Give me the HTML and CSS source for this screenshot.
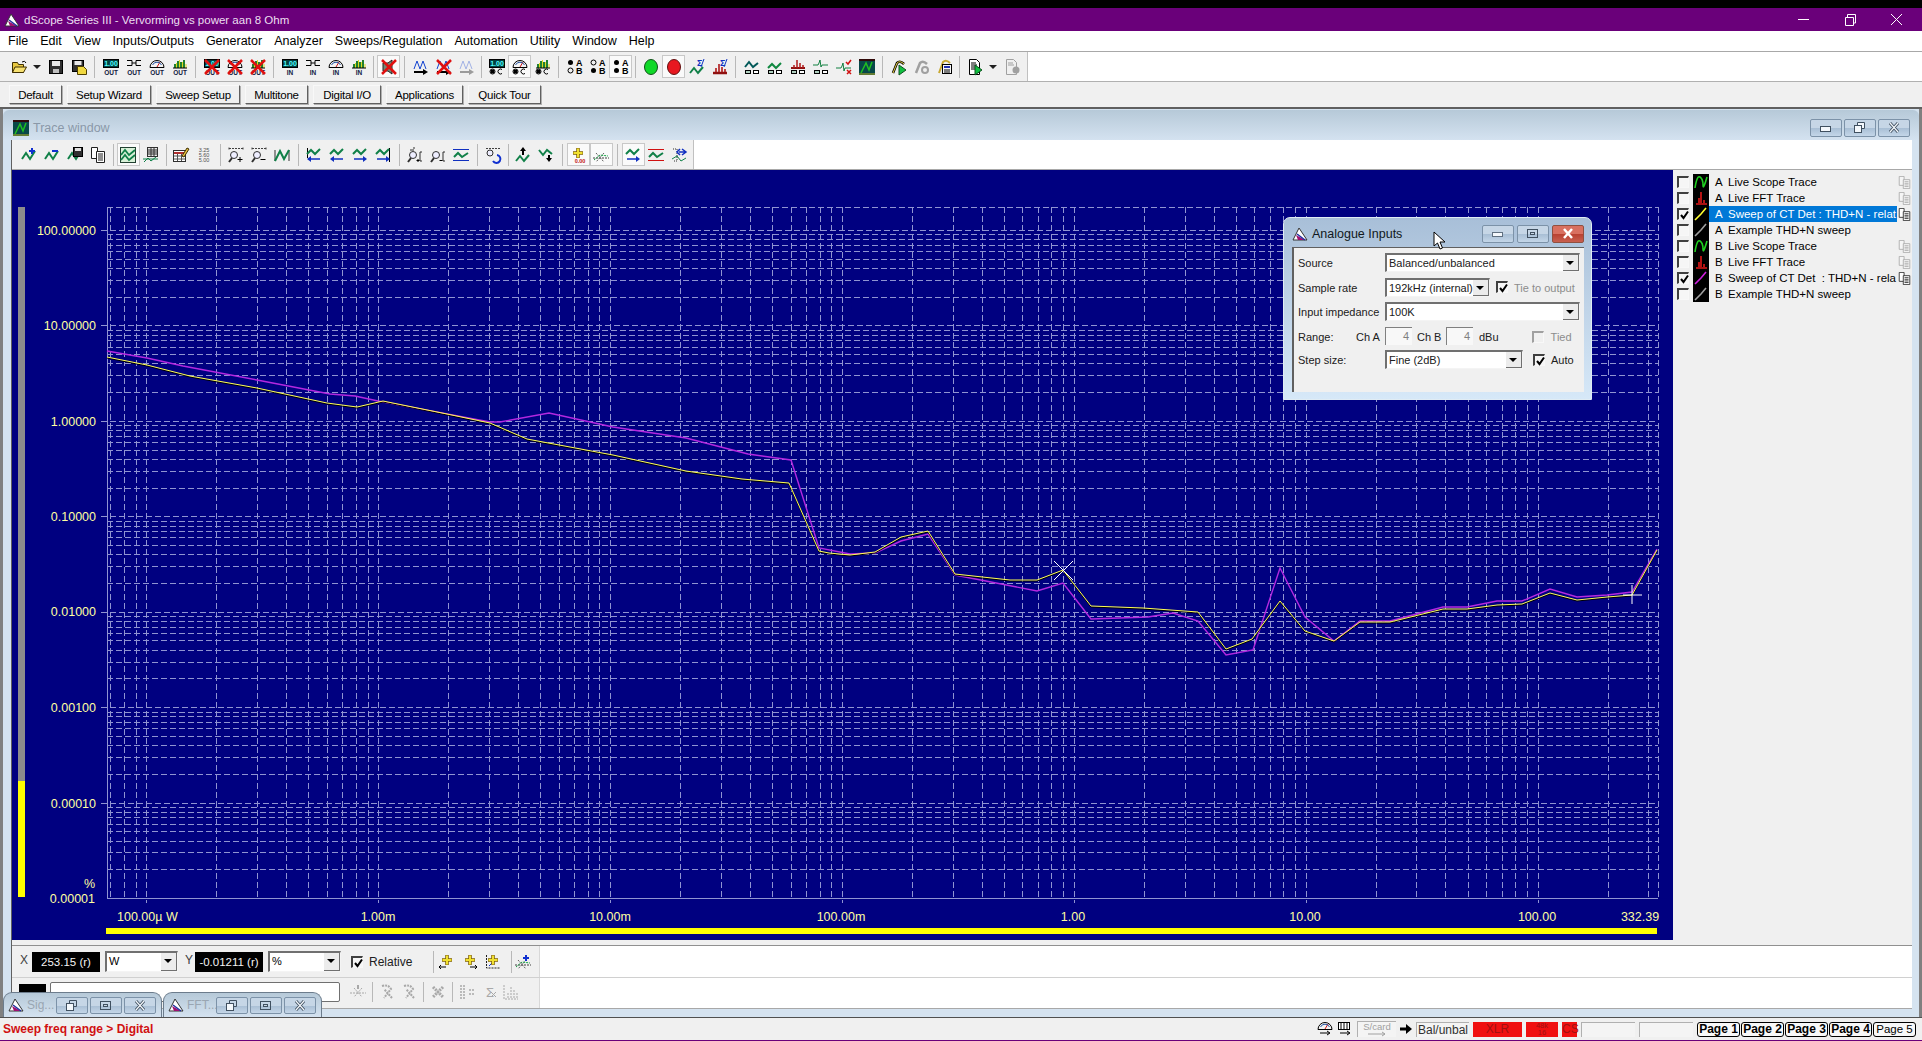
FILE: index.html
```html
<!DOCTYPE html>
<html lang="en">
<head>
    <meta charset="UTF-8">
    <title>dScope Series III - Vervorming vs power aan 8 Ohm</title>
    <link rel="stylesheet" href="styles.css">
</head>
<body>
    <svg class="defs" width="0" height="0">
        <defs>
            <g id="logo"><path d="M1 14L7 2l8 12z" fill="#fff" stroke="#333"/><path d="M4 9l9 5H6z" fill="#a01070"/><path d="M5 8l8 6" stroke="#2030a0" stroke-width="1.5"/></g>
            <g id="folder"><path d="M1.5 3.5h5l1 2h5v8h-11z" fill="#e8c840" stroke="#403000"/><path d="M4 8h11.5l-3 5.5h-11z" fill="#f6e070" stroke="#403000"/><path d="M11 3q3-2 4 1" fill="none" stroke="#000"/></g>
            <g id="save"><rect x="1.5" y="1.5" width="13" height="13" fill="#303030" stroke="#000"/><rect x="4" y="2" width="8" height="5" fill="#e8e8e8"/><rect x="5" y="10" width="6" height="4" fill="#c0c0c0"/></g>
            <g id="saveas"><rect x="1.5" y="1.5" width="11" height="11" fill="#303030" stroke="#000"/><rect x="3.5" y="2" width="7" height="4" fill="#e8e8e8"/><path d="M6.5 7.5h6l3 3v5h-9z" fill="#f0d840" stroke="#504000"/></g>
            <g id="readout"><rect x=".5" y=".5" width="15" height="8" fill="#004040" stroke="#000"/><text class="ico-t" x="8" y="7" fill="#50ffff">1.00</text></g>
            <g id="filter"><path d="M1 1.500h5v5H1M15 1.500h-5v5h5M6 4h4" fill="none" stroke="#000"/></g>
            <g id="meter"><path d="M1 8.500a7 7 0 0 1 14 0z" fill="#f4f4f4" stroke="#000"/><path d="M8 8l3-5" stroke="#d01010"/><path d="M3.500 6a5 5 0 0 1 9 0" fill="none" stroke="#2050a0"/></g>
            <g id="multi"><path d="M3 9V5M6 9V2M9 9V3M12 9V1" stroke="#208030" stroke-width="2"/><path d="M4.500 9V4M7.500 9V1M10.500 9V3M14 9V5" stroke="#e0d820"/><path d="M1 9h14" stroke="#000"/></g>
            <g id="cross"><path d="M1 1l14 14M15 1L1 15" stroke="#e01010" stroke-width="2.500"/></g>
            <g id="spk"><path d="M2 4h5l4-3v14l-4-3H2z" fill="#708878" stroke="#202020"/></g>
            <g id="blue-wave"><path d="M1 10l3-8 3 8 3-8 3 8" fill="none" stroke="#1040d0"/></g>
            <g id="arrow-r"><path d="M1 13h10" stroke="#000" stroke-width="2"/><path d="M10 10l5 3-5 3z"/></g>
            <g id="radios"><circle cx="3.500" cy="12.500" r="2" fill="#000"/><circle cx="3.500" cy="12.500" r="2.500" fill="none" stroke="#000"/><path d="M13 10.500a2.500 2.500 0 1 0 0 4" fill="none" stroke="#000"/></g>
            <g id="ab"><text class="ico-ab" x="9" y="7">A</text><text class="ico-ab" x="9" y="15">B</text></g>
            <g id="wave"><path d="M1 12l4-6 4 6 5-8" fill="none" stroke="#108048" stroke-width="2"/></g>
            <g id="wave-low"><path d="M1 14l4-5 4 5 5-6" fill="none" stroke="#108048" stroke-width="2"/></g>
            <g id="green-ball"><ellipse cx="8" cy="8" rx="6.500" ry="7.500" fill="#10d828" stroke="#105018"/></g>
            <g id="red-ball"><ellipse cx="8" cy="8" rx="6.500" ry="7.500" fill="#e81820" stroke="#601010"/></g>
            <g id="sigma"><text class="ico-s" x="8" y="7">Σ</text><path d="M15 0l-3 8" stroke="#1030c0"/></g>
            <g id="spec-red"><path d="M1 14h14" stroke="#901010" stroke-width="2.500"/><path d="M4 13V9M7 13V5M10 13V8M13 13V10" stroke="#b01818" stroke-width="1.600"/></g>
            <g id="tiles"><rect x="1.500" y="11.500" width="5" height="3" fill="#b0d0c0" stroke="#000"/><rect x="9.500" y="11.500" width="5" height="3" fill="#fff" stroke="#000"/></g>
            <g id="tile-wave"><path d="M1 8l4-5 4 5 5-4" fill="none" stroke="#005858" stroke-width="2"/></g>
            <g id="tile-wave2"><path d="M1 9l4-4 4 4 5-5" fill="none" stroke="#108840" stroke-width="2"/></g>
            <g id="tile-spec"><path d="M1 9h14" stroke="#901010" stroke-width="2"/><path d="M4 9V6M7 9V1M10 9V4M13 9V6" stroke="#b01818" stroke-width="1.500"/></g>
            <g id="tile-imp"><path d="M0 6h5l1-2 1-3 1 7 1-2h6" fill="none" stroke="#108040"/></g>
            <g id="imp-x"><path d="M0 9h5l1-2 1-3 1 8 1-3h6" fill="none" stroke="#108040"/><path d="M10 3l2 2 3-4" fill="none" stroke="#d01010" stroke-width="1.500"/><path d="M11 11l4 4M15 11l-4 4" stroke="#d01010" stroke-width="1.500"/></g>
            <g id="thumb"><rect width="16" height="16" fill="#084848"/><rect width="16" height="2" fill="#300808"/><path d="M2 14l5-10 3 7 3-8" fill="none" stroke="#20c020" stroke-width="1.500"/><path d="M0 15h16" stroke="#c0b020"/></g>
            <g id="curve"><path d="M2 14L6 4q3-3 7 1" fill="none" stroke="#000" stroke-width="2.500"/><path d="M2 14L6 4q3-3 7 1" fill="none" stroke="#e8d040"/></g>
            <g id="play"><path d="M8 6l7 5-7 5z" fill="#10c040" stroke="#105020"/></g>
            <g id="curve-gray"><path d="M2 14L6 4q3-3 7 1" fill="none" stroke="#a0a0a0" stroke-width="2.500"/><circle cx="11" cy="11" r="3" fill="none" stroke="#a0a0a0" stroke-width="2"/></g>
            <g id="notes"><path d="M2 14L6 3q3-3 7 1" fill="none" stroke="#c8a830" stroke-width="2"/><rect x="5.500" y="5.500" width="9" height="9" fill="#f8f8f8" stroke="#000"/><path d="M7 8h6" stroke="#2030b0" stroke-width="2"/><path d="M7 11h6M7 13h6" stroke="#000"/></g>
            <g id="doc"><path d="M2.500 .5h7l3 3v12h-10z" fill="#fff" stroke="#000"/><path d="M4 4h5M4 6h6M4 8h6M4 10h5" stroke="#000"/></g>
            <g id="doc-gray"><path d="M2.500 .5h7l3 3v12h-10z" fill="#f0f0f0" stroke="#a0a0a0"/><path d="M4 4h5M4 6h6" stroke="#a0a0a0"/><circle cx="12" cy="11" r="3.500" fill="#a0a0a0"/></g>
            <g id="plus-blue"><path d="M11 1v6M8 4h6" stroke="#1030d0" stroke-width="2"/></g>
            <g id="minus-blue"><path d="M8 4h6" stroke="#1030d0" stroke-width="2"/></g>
            <g id="copy"><path d="M1.500 .5h6v11h-6z" fill="#fff" stroke="#202020"/><path d="M6.500 4.500h8v11h-8z" fill="#fff" stroke="#202020"/><path d="M8 7h5M8 9h5M8 11h5M8 13h5" stroke="#202020"/></g>
            <g id="disk-small"><rect x="6.500" y=".5" width="9" height="9" fill="#303030" stroke="#000"/><rect x="8" y="1" width="6" height="3" fill="#e0e0e0"/></g>
            <g id="double-wave"><rect x=".5" y=".5" width="15" height="15" fill="#d8f0d8" stroke="#204030"/><path d="M1 8l4-5 4 5 6-5M1 13l4-5 4 5 6-5" fill="none" stroke="#108048" stroke-width="1.800"/></g>
            <g id="table-wave"><rect x="4.500" y=".5" width="10" height="9" fill="#e8e8e8" stroke="#303030"/><path d="M5 3h9M5 5h9M5 7h9M8 1v8M11 1v8" stroke="#303030"/><path d="M0 12h15M1 15l4-4 3 3 5-4" fill="none" stroke="#108048"/></g>
            <g id="form"><rect x=".5" y="3.500" width="12" height="11" fill="#fff" stroke="#303030"/><path d="M1 6h11" stroke="#b03030" stroke-width="2"/><path d="M1 9h11M1 12h11M4.500 7v7M8.500 7v7" stroke="#505050"/><path d="M9 9l5-8 2 1-5 8z" fill="#e8c040" stroke="#403000"/></g>
            <g id="mag"><circle cx="6" cy="8" r="3.500" fill="#eef" stroke="#303030"/><path d="M4 11l-3 4" stroke="#303030" stroke-width="2"/></g>
            <g id="dots-top"><path d="M1 1.500h14M1 .5v3M15 .5v3" stroke="#404040" stroke-dasharray="2 1"/></g>
            <g id="bracket"><path d="M15 5h-2v9h2" fill="none" stroke="#303030"/></g>
            <g id="nwave"><path d="M1 3v11M15 3v11" stroke="#303030"/><path d="M1 14l5-10 4 8 5-9" fill="none" stroke="#108048" stroke-width="2"/></g>
            <g id="chev"><path d="M1 7l4-4 4 4 5-5" fill="none" stroke="#108048" stroke-width="2"/></g>
            <g id="arrow-l-blue"><path d="M4 12h10" stroke="#1030c0" stroke-width="1.500"/><path d="M5 9l-4 3 4 3z" fill="#1030c0"/></g>
            <g id="arrow-rb"><path d="M2 12h10" stroke="#1030c0" stroke-width="1.500"/><path d="M11 9l4 3-4 3z" fill="#1030c0"/></g>
            <g id="limits"><path d="M0 2.500h16M0 13.500h16" stroke="#1030c0"/><path d="M1 10l4-4 4 4 6-4" fill="none" stroke="#108048" stroke-width="2"/></g>
            <g id="limits-red"><path d="M0 2.500h16M0 13.500h16" stroke="#d01010"/><path d="M1 10l4-4 4 4 6-4" fill="none" stroke="#108048" stroke-width="2"/></g>
            <g id="mag-back"><path d="M1 1.500h14" stroke="#404040" stroke-dasharray="2 1"/><circle cx="5" cy="6" r="3" fill="#eef" stroke="#303030"/><path d="M8 14a4 4 0 1 0 4-6" fill="none" stroke="#1030d0" stroke-width="2"/></g>
            <g id="up"><path d="M8 8V3" stroke="#000" stroke-width="2"/><path d="M5 4l3-4 3 4z"/></g>
            <g id="down"><path d="M11 8v5" stroke="#000" stroke-width="2"/><path d="M8 11l3 4 3-4z"/></g>
            <g id="ycross"><path d="M8 1v10M3 6h10" stroke="#806000" stroke-width="3.500"/><path d="M8 1.500v9M3.500 6h9" stroke="#f0e030" stroke-width="2"/></g>
            <g id="dotwave"><path d="M0 11h16" stroke="#404040" stroke-dasharray="2 1"/><path d="M3 6l8 9M11 6l-8 9" stroke="#606060" stroke-dasharray="2 1"/><path d="M1 13l6-5 8 1" fill="none" stroke="#10a040" stroke-dasharray="2 1"/></g>
            <g id="swap"><path d="M2 2h4v12H2" fill="none" stroke="#303030" stroke-dasharray="1 1"/><path d="M8 5h7M11 2l4 3-4 3M9 2L6 5l3 3" fill="none" stroke="#1030c0" stroke-width="1.500"/><path d="M1 12l5-3 4 5 5-3" fill="none" stroke="#108048"/></g>
            <g id="axes"><path d="M1.500 1v13h14" fill="none" stroke="#202020" stroke-dasharray="2 1"/><path d="M4 12l4-4" stroke="#1030d0"/></g>
            <g id="gray-x"><path d="M3 3l10 10M13 3L3 13" stroke="#a8a8a8" stroke-width="3" stroke-dasharray="2 1"/></g>
            <g id="gray-c"><path d="M3 2q6-2 9 3L5 14M13 14L5 5" fill="none" stroke="#a8a8a8" stroke-width="2" stroke-dasharray="2 1"/></g>
            <g id="gray-dot"><path d="M0 9h16M4 4l8 9M12 4l-8 9" stroke="#a8a8a8" stroke-dasharray="2 1"/><path d="M8 1v4" stroke="#a8a8a8" stroke-width="2"/></g>
            <g id="gray-list"><path d="M1 2h5M1 5h5M1 8h5M1 11h5M1 14h5M10 6h5M10 10h5" stroke="#a8a8a8" stroke-width="1.500" stroke-dasharray="2 1"/></g>
            <g id="gray-sum"><text class="ico-g" x="5" y="13">Σ</text><path d="M10 8l5 5M15 8l-5 5" stroke="#a8a8a8"/></g>
            <g id="gray-fft"><path d="M1 1v14h14M5 14V8M8 14V3M11 14V6M14 14V9" fill="none" stroke="#a8a8a8" stroke-dasharray="2 1"/></g>
            <g id="check"><path d="M2 5l2.500 3L9 1.500" fill="none" stroke="#000" stroke-width="2"/></g>
        </defs>
    </svg>

    <div class="screen-top"></div>

    <div class="titlebar">
        <svg class="ico logo-white"><use href="#logo"/></svg>
        <span class="title-text">dScope Series III - Vervorming vs power aan 8 Ohm</span>
        <div class="sys-buttons">
            <svg class="sys-btn" viewBox="0 0 46 23"><path d="M17 11.500h11" stroke="#fff"/></svg>
            <svg class="sys-btn" viewBox="0 0 46 23"><path d="M18.500 9.500h8v8h-8zM20.500 9V6.500h8V15h-1.500" fill="none" stroke="#fff"/></svg>
            <svg class="sys-btn" viewBox="0 0 46 23"><path d="M18 6l11 11M29 6L18 17" stroke="#fff"/></svg>
        </div>
    </div>

    <div class="menubar">
        <span>File</span><span>Edit</span><span>View</span><span>Inputs/Outputs</span><span>Generator</span><span>Analyzer</span><span>Sweeps/Regulation</span><span>Automation</span><span>Utility</span><span>Window</span><span>Help</span>
    </div>

    <div class="band band-main">
        <div class="tools tools-main">
            <span class="tool"><svg class="ico"><use href="#folder"/></svg></span>
            <span class="tool-dd"></span>
            <span class="tool"><svg class="ico"><use href="#save"/></svg></span>
            <span class="tool"><svg class="ico"><use href="#saveas"/></svg></span>
            <span class="sep"></span>
            <span class="tool"><svg class="ico"><use href="#readout"/><text class="ico-l" x="8" y="15.500">OUT</text></svg></span>
            <span class="tool"><svg class="ico"><use href="#filter"/><text class="ico-l" x="8" y="15.500">OUT</text></svg></span>
            <span class="tool"><svg class="ico"><use href="#meter"/><text class="ico-l" x="8" y="15.500">OUT</text></svg></span>
            <span class="tool"><svg class="ico"><use href="#multi"/><text class="ico-l" x="8" y="15.500">OUT</text></svg></span>
            <span class="sep"></span>
            <span class="tool"><svg class="ico"><use href="#readout"/><text class="ico-l" x="8" y="15.500">OUT</text><use href="#cross"/></svg></span>
            <span class="tool"><svg class="ico"><use href="#meter"/><text class="ico-l" x="8" y="15.500">OUT</text><use href="#cross"/></svg></span>
            <span class="tool"><svg class="ico"><use href="#multi"/><text class="ico-l" x="8" y="15.500">OUT</text><use href="#cross"/></svg></span>
            <span class="sep"></span>
            <span class="tool"><svg class="ico"><use href="#readout"/><text class="ico-l" x="8" y="15.500">IN</text></svg></span>
            <span class="tool"><svg class="ico"><use href="#filter"/><text class="ico-l" x="8" y="15.500">IN</text></svg></span>
            <span class="tool"><svg class="ico"><use href="#meter"/><text class="ico-l" x="8" y="15.500">IN</text></svg></span>
            <span class="tool"><svg class="ico"><use href="#multi"/><text class="ico-l" x="8" y="15.500">IN</text></svg></span>
            <span class="sep sep-thin"></span>
            <span class="tool on"><svg class="ico"><use href="#spk"/><use href="#cross"/></svg></span>
            <span class="sep"></span>
            <span class="tool"><svg class="ico"><use href="#blue-wave"/><use href="#arrow-r"/></svg></span>
            <span class="tool"><svg class="ico"><use href="#blue-wave"/><use href="#arrow-r"/><use href="#cross"/></svg></span>
            <span class="tool faded"><svg class="ico"><use href="#blue-wave"/><use href="#arrow-r"/></svg></span>
            <span class="sep sep-thin"></span>
            <span class="tool"><svg class="ico"><use href="#readout"/><use href="#radios"/></svg></span>
            <span class="tool on"><svg class="ico"><use href="#meter"/><use href="#radios"/></svg></span>
            <span class="tool"><svg class="ico"><use href="#multi"/><use href="#radios"/></svg></span>
            <span class="sep"></span>
            <span class="tool"><svg class="ico"><circle cx="3.500" cy="3.500" r="2.500" fill="#000"/><circle cx="3.500" cy="11.500" r="2.500" fill="none" stroke="#000"/><use href="#ab"/></svg></span>
            <span class="tool"><svg class="ico"><circle cx="3.500" cy="3.500" r="2.500" fill="none" stroke="#000"/><circle cx="3.500" cy="11.500" r="2.500" fill="#000"/><use href="#ab"/></svg></span>
            <span class="tool on"><svg class="ico"><circle cx="3.500" cy="3.500" r="2.500" fill="#000"/><circle cx="3.500" cy="11.500" r="2.500" fill="#000"/><use href="#ab"/></svg></span>
            <span class="sep sep-thin"></span>
            <span class="tool"><svg class="ico"><use href="#green-ball"/></svg></span>
            <span class="tool on"><svg class="ico"><use href="#red-ball"/></svg></span>
            <span class="tool"><svg class="ico"><use href="#wave-low"/><use href="#sigma"/></svg></span>
            <span class="tool"><svg class="ico"><use href="#spec-red"/><use href="#sigma"/></svg></span>
            <span class="sep"></span>
            <span class="tool"><svg class="ico"><use href="#tile-wave"/><use href="#tiles"/></svg></span>
            <span class="tool"><svg class="ico"><use href="#tile-wave2"/><use href="#tiles"/></svg></span>
            <span class="tool"><svg class="ico"><use href="#tile-spec"/><use href="#tiles"/></svg></span>
            <span class="tool"><svg class="ico"><use href="#tile-imp"/><use href="#tiles"/></svg></span>
            <span class="tool"><svg class="ico"><use href="#imp-x"/></svg></span>
            <span class="tool"><svg class="ico"><use href="#thumb"/></svg></span>
            <span class="sep"></span>
            <span class="tool"><svg class="ico"><use href="#curve"/><use href="#play"/></svg></span>
            <span class="tool"><svg class="ico"><use href="#curve-gray"/></svg></span>
            <span class="tool"><svg class="ico"><use href="#notes"/></svg></span>
            <span class="sep sep-thin"></span>
            <span class="tool"><svg class="ico"><use href="#doc"/><use href="#play"/></svg></span>
            <span class="tool-dd"></span>
            <span class="tool"><svg class="ico"><use href="#doc-gray"/></svg></span>
        </div>
    </div>

    <div class="band band-shortcuts">
        <span class="shortcut w-default">Default</span>
        <span class="shortcut w-wizard">Setup Wizard</span>
        <span class="shortcut w-wizard">Sweep Setup</span>
        <span class="shortcut w-multi">Multitone</span>
        <span class="shortcut w-digital">Digital I/O</span>
        <span class="shortcut w-apps">Applications</span>
        <span class="shortcut w-tour">Quick Tour</span>
    </div>

    <div class="mdi">
        <div class="window">
            <div class="win-title">
                <svg class="ico"><use href="#thumb"/></svg>
                <span class="win-title-text">Trace window</span>
                <div class="win-buttons">
                    <span class="win-btn"><svg class="glyph" viewBox="0 0 14 12"><rect x="1.500" y="4.500" width="10" height="5" fill="#f4f8fc" stroke="#405060"/></svg></span>
                    <span class="win-btn"><svg class="glyph" viewBox="0 0 14 12"><path d="M4.500 3.500V.5h7v6h-3" fill="#f4f8fc" stroke="#405060"/><rect x="1.500" y="3.500" width="7" height="7" fill="#f4f8fc" stroke="#405060"/></svg></span>
                    <span class="win-btn"><svg class="glyph" viewBox="0 0 14 12"><path d="M3 1l8 9M11 1l-8 9" stroke="#405060" stroke-width="3"/><path d="M3 1l8 9M11 1l-8 9" stroke="#f4f8fc" stroke-width="1.200"/></svg></span>
                </div>
            </div>
            <div class="win-body">
                <div class="band band-trace">
                    <div class="tools tools-trace">
                        <span class="tool"><svg class="ico"><use href="#wave"/><use href="#plus-blue"/></svg></span>
                        <span class="tool"><svg class="ico"><use href="#wave"/><use href="#minus-blue"/></svg></span>
                        <span class="tool"><svg class="ico"><use href="#wave"/><use href="#disk-small"/></svg></span>
                        <span class="tool"><svg class="ico"><use href="#copy"/></svg></span>
                        <span class="sep sep-thin"></span>
                        <span class="tool on"><svg class="ico"><use href="#double-wave"/></svg></span>
                        <span class="tool"><svg class="ico"><use href="#table-wave"/></svg></span>
                        <span class="sep sep-thin"></span>
                        <span class="tool"><svg class="ico"><use href="#form"/></svg></span>
                        <span class="tool"><svg class="ico"><text class="ico-n" x="8" y="5">3.25</text><text class="ico-n" x="8" y="10">5.60</text><text class="ico-n" x="8" y="15">5.00</text></svg></span>
                        <span class="sep"></span>
                        <span class="tool"><svg class="ico"><use href="#dots-top"/><use href="#mag"/><path d="M12 10v5M9.500 12.500h5" stroke="#000"/></svg></span>
                        <span class="tool"><svg class="ico"><use href="#dots-top"/><use href="#mag"/><path d="M9.500 12.500h5" stroke="#000"/></svg></span>
                        <span class="tool"><svg class="ico"><use href="#nwave"/></svg></span>
                        <span class="sep"></span>
                        <span class="tool"><svg class="ico"><path d="M1.500 1v10" stroke="#000"/><use href="#chev"/><use href="#arrow-l-blue"/></svg></span>
                        <span class="tool"><svg class="ico"><use href="#chev"/><use href="#arrow-l-blue"/></svg></span>
                        <span class="tool"><svg class="ico"><use href="#chev"/><use href="#arrow-rb"/></svg></span>
                        <span class="tool"><svg class="ico"><path d="M14.500 1v14" stroke="#000"/><use href="#chev"/><use href="#arrow-rb"/></svg></span>
                        <span class="sep"></span>
                        <span class="tool"><svg class="ico"><use href="#mag"/><path d="M8 1h-2M3 3h4" stroke="#303030"/><use href="#bracket"/><path d="M11 12v3M9.500 13.500h3" stroke="#000"/></svg></span>
                        <span class="tool"><svg class="ico"><use href="#mag"/><use href="#bracket"/><path d="M9.500 13.500h3" stroke="#000"/></svg></span>
                        <span class="tool"><svg class="ico"><use href="#limits"/></svg></span>
                        <span class="sep"></span>
                        <span class="tool"><svg class="ico"><use href="#mag-back"/></svg></span>
                        <span class="sep sep-thin"></span>
                        <span class="tool"><svg class="ico"><use href="#wave-low"/><use href="#up"/></svg></span>
                        <span class="tool"><svg class="ico"><path d="M1 3l4 5 4-5 5 4" fill="none" stroke="#108048" stroke-width="2"/><use href="#down"/></svg></span>
                        <span class="sep"></span>
                        <span class="tool on"><svg class="ico"><use href="#ycross"/><text class="ico-z" x="10" y="15.500">0.00</text></svg></span>
                        <span class="tool on"><svg class="ico"><use href="#dotwave"/></svg></span>
                        <span class="sep"></span>
                        <span class="tool on"><svg class="ico"><use href="#chev"/><use href="#arrow-rb"/></svg></span>
                        <span class="tool"><svg class="ico"><use href="#limits-red"/></svg></span>
                        <span class="tool"><svg class="ico"><use href="#swap"/></svg></span>
                    </div>
                </div>

                <div class="trace-main">
                    <div class="plot">
                        <svg class="plot-svg" viewBox="12 170 1661 770" width="1661" height="770">
                            <rect class="range-y-off" x="18" y="207" width="7" height="574"/>
                            <rect class="range-on" x="18" y="781" width="7" height="116"/>
                            <rect class="range-on" x="106" y="928" width="1551" height="6"/>
                            <g id="grid"></g>
                            <g class="axis-text">
                                <text class="y-label" x="96" y="234.500">100.00000</text>
                                <text class="y-label" x="96" y="330">10.00000</text>
                                <text class="y-label" x="96" y="425.500">1.00000</text>
                                <text class="y-label" x="96" y="521">0.10000</text>
                                <text class="y-label" x="96" y="616">0.01000</text>
                                <text class="y-label" x="96" y="712">0.00100</text>
                                <text class="y-label" x="96" y="807.500">0.00010</text>
                                <text class="y-label" x="95" y="887.500">%</text>
                                <text class="y-label" x="95" y="903">0.00001</text>
                                <text x="117" y="921">100.00µ W</text>
                                <text class="x-label" x="378" y="921">1.00m</text>
                                <text class="x-label" x="610" y="921">10.00m</text>
                                <text class="x-label" x="841" y="921">100.00m</text>
                                <text class="x-label" x="1073" y="921">1.00</text>
                                <text class="x-label" x="1305" y="921">10.00</text>
                                <text class="x-label" x="1537" y="921">100.00</text>
                                <text class="x-label" x="1640" y="921">332.39</text>
                            </g>
                            <polyline class="trace-b" points="107,351 147,358 183,366 257,380 330,394 355,396 378,401 447,414 490,422 500,422 549,413 613,427 686,438 748,454 791,460 819,548 850,554 875,553 901,541 928,534 955,575 1037,591 1063,583 1091,619 1148,617 1173,613 1198,621 1226,655 1253,650 1280,568 1305,617 1334,641 1360,621 1390,621 1443,607 1467,607 1497,601 1522,601 1550,589 1577,597 1607,595 1632,592 1657,549"/>
                            <polyline class="trace-a-shade" points="107,357 147,365 190,376 257,388 327,403 357,407 383,401 447,414 490,423 527,439 613,455 686,471 742,479 789,483 819,551 829,553 850,555 875,552 901,537 928,531 955,574 1010,580 1037,580 1063,570 1091,606 1143,608 1198,612 1226,649 1252,639 1280,601 1305,631 1334,641 1360,622 1390,622 1443,609 1467,609 1497,605 1522,604 1550,593 1577,600 1607,597 1632,595 1657,550"/>
                            <polyline class="trace-a" points="107,357 147,365 190,376 257,388 327,403 357,407 383,401 447,414 490,423 527,439 613,455 686,471 742,479 789,483 819,551 829,553 850,555 875,552 901,537 928,531 955,574 1010,580 1037,580 1063,570 1091,606 1143,608 1198,612 1226,649 1252,639 1280,601 1305,631 1334,641 1360,622 1390,622 1443,609 1467,609 1497,605 1522,604 1550,593 1577,600 1607,597 1632,595 1657,550"/>
                            <path class="cursor" d="M1054 561l19 19M1073 561l-19 19M1632 585v19M1623 595h19"/>
                        </svg>
                    </div>
                    <div class="trace-list">
                        <div class="trace-row"><span class="chk"></span><span class="trace-name"><svg class="thumb" viewBox="0 0 16 16"><rect width="16" height="16"/><path d="M2 14Q4 1 7 3t3 8 4-8" fill="none" stroke="#20d020"/></svg><span class="ch">A</span><span>Live Scope Trace</span></span><svg class="page" viewBox="0 0 16 16"><use href="#copy"/></svg></div>
                        <div class="trace-row"><span class="chk"></span><span class="trace-name"><svg class="thumb" viewBox="0 0 16 16"><rect width="16" height="16"/><path d="M8 13V2M6 13V8M11 13v-3M3 14h11" stroke="#e01818"/></svg><span class="ch">A</span><span>Live FFT Trace</span></span><svg class="page" viewBox="0 0 16 16"><use href="#copy"/></svg></div>
                        <div class="trace-row"><span class="chk checked"><svg class="chk-mark"><use href="#check"/></svg></span><span class="trace-name selected"><svg class="thumb" viewBox="0 0 16 16"><rect width="16" height="16"/><path d="M2 14L8 8l5-6" fill="none" stroke="#ffff30"/></svg><span class="ch">A</span><span>Sweep of CT Det : THD+N - relat</span></span><svg class="page page-dark" viewBox="0 0 16 16"><use href="#copy"/></svg></div>
                        <div class="trace-row"><span class="chk"></span><span class="trace-name"><svg class="thumb" viewBox="0 0 16 16"><rect width="16" height="16"/><path d="M2 14L8 8l5-6" fill="none" stroke="#a0a0a0"/></svg><span class="ch">A</span><span>Example THD+N sweep</span></span></div>
                        <div class="trace-row"><span class="chk"></span><span class="trace-name"><svg class="thumb" viewBox="0 0 16 16"><rect width="16" height="16"/><path d="M2 14Q4 1 7 3t3 8 4-8" fill="none" stroke="#20d020"/></svg><span class="ch">B</span><span>Live Scope Trace</span></span><svg class="page" viewBox="0 0 16 16"><use href="#copy"/></svg></div>
                        <div class="trace-row"><span class="chk"></span><span class="trace-name"><svg class="thumb" viewBox="0 0 16 16"><rect width="16" height="16"/><path d="M8 13V2M6 13V8M11 13v-3M3 14h11" stroke="#e01818"/></svg><span class="ch">B</span><span>Live FFT Trace</span></span><svg class="page" viewBox="0 0 16 16"><use href="#copy"/></svg></div>
                        <div class="trace-row"><span class="chk checked"><svg class="chk-mark"><use href="#check"/></svg></span><span class="trace-name"><svg class="thumb" viewBox="0 0 16 16"><rect width="16" height="16"/><path d="M2 14L8 8l5-6" fill="none" stroke="#d020e0"/></svg><span class="ch">B</span><span>Sweep of CT Det  : THD+N - rela</span></span><svg class="page page-dark" viewBox="0 0 16 16"><use href="#copy"/></svg></div>
                        <div class="trace-row"><span class="chk"></span><span class="trace-name"><svg class="thumb" viewBox="0 0 16 16"><rect width="16" height="16"/><path d="M2 14L8 8l5-6" fill="none" stroke="#a0a0a0"/></svg><span class="ch">B</span><span>Example THD+N sweep</span></span></div>
                    </div>
                </div>

                <div class="lower-row">
                    <div class="band band-cursor">
                        <span class="axis-name">X</span>
                        <span class="readout">253.15 (r)</span>
                        <span class="combo combo-unit"><span class="combo-text">W</span><span class="combo-arrow"></span></span>
                        <span class="axis-name axis-y">Y</span>
                        <span class="readout">-0.01211 (r)</span>
                        <span class="combo combo-unit"><span class="combo-text">%</span><span class="combo-arrow"></span></span>
                        <span class="chk checked relative-chk"><svg class="chk-mark"><use href="#check"/></svg></span>
                        <span class="relative-text">Relative</span>
                        <span class="sep sep-cursor"></span>
                        <svg class="ico wide"><use href="#ycross"/><path d="M0 13h7M2 11l-2 2 2 2" fill="none" stroke="#000"/></svg>
                        <svg class="ico wide"><use href="#ycross"/><path d="M8 13h7M13 11l2 2-2 2" fill="none" stroke="#000"/></svg>
                        <svg class="ico wide"><use href="#axes"/><use href="#ycross"/></svg>
                        <span class="sep sep-thin"></span>
                        <svg class="ico"><use href="#dotwave"/><use href="#plus-blue"/></svg>
                    </div>
                </div>
                <div class="lower-row lower-last">
                    <div class="band band-calc">
                        <span class="calc-swatch"></span>
                        <span class="calc-input"></span>
                        <svg class="ico"><use href="#gray-dot"/></svg>
                        <span class="sep sep-calc"></span>
                        <svg class="ico"><use href="#gray-c"/></svg>
                        <svg class="ico"><use href="#gray-c"/></svg>
                        <span class="sep sep-calc"></span>
                        <svg class="ico"><use href="#gray-x"/></svg>
                        <span class="sep sep-calc"></span>
                        <svg class="ico"><use href="#gray-list"/></svg>
                        <svg class="ico"><use href="#gray-sum"/></svg>
                        <svg class="ico"><use href="#gray-fft"/></svg>
                    </div>
                </div>
            </div>
        </div>
    </div>

    <!-- floating dialog -->
    <div class="dialog">
        <div class="dialog-title">
            <svg class="ico"><use href="#logo"/></svg>
            <span class="dialog-name">Analogue Inputs</span>
            <div class="dialog-buttons">
                <span class="win-btn"><svg class="glyph" viewBox="0 0 14 12"><rect x="1.500" y="4.500" width="10" height="4" fill="#f4f8fc" stroke="#607080"/></svg></span>
                <span class="win-btn"><svg class="glyph" viewBox="0 0 14 12"><rect x="1.500" y="1.500" width="10" height="8" fill="none" stroke="#405060"/><rect x="4.500" y="4.500" width="4" height="2" fill="none" stroke="#405060"/></svg></span>
                <span class="win-btn win-close"><svg class="glyph" viewBox="0 0 14 12"><path d="M3 1l8 9M11 1l-8 9" stroke="#fff" stroke-width="2.500"/></svg></span>
            </div>
        </div>
        <div class="dialog-panel">
            <div class="dlg-row">
                <span class="dlg-label">Source</span>
                <span class="combo combo-full"><span class="combo-text">Balanced/unbalanced</span><span class="combo-arrow"></span></span>
            </div>
            <div class="dlg-row">
                <span class="dlg-label">Sample rate</span>
                <span class="combo combo-rate"><span class="combo-text">192kHz (internal)</span><span class="combo-arrow"></span></span>
                <span class="chk checked chk-tie"><svg class="chk-mark"><use href="#check"/></svg></span>
                <span class="muted">Tie to output</span>
            </div>
            <div class="dlg-row">
                <span class="dlg-label">Input impedance</span>
                <span class="combo combo-full"><span class="combo-text">100K</span><span class="combo-arrow"></span></span>
            </div>
            <div class="dlg-row">
                <span class="dlg-label dlg-range">Range:</span>
                <span class="dlg-ch">Ch A</span>
                <span class="range-box">4</span>
                <span class="dlg-chb">Ch B</span>
                <span class="range-box">4</span>
                <span class="dlg-unit">dBu</span>
                <span class="chk chk-tied"></span>
                <span class="muted">Tied</span>
            </div>
            <div class="dlg-row">
                <span class="dlg-label">Step size:</span>
                <span class="combo combo-step"><span class="combo-text">Fine (2dB)</span><span class="combo-arrow"></span></span>
                <span class="chk checked chk-auto"><svg class="chk-mark"><use href="#check"/></svg></span>
                <span>Auto</span>
            </div>
        </div>
    </div>
    <svg class="mouse" viewBox="0 0 14 20"><path d="M1 1v14l3.500-3 2.500 6 2.500-1-2.500-6H12z" fill="#fff" stroke="#000"/></svg>

    <!-- minimised windows, they sit over the calc row -->
    <div class="minimised first">
        <svg class="ico"><use href="#logo"/></svg>
        <span class="min-name">Sig...</span>
        <span class="win-btn"><svg class="glyph" viewBox="0 0 14 12"><path d="M4.500 3.500V.5h7v6h-3" fill="none" stroke="#405060"/><rect x="1.500" y="3.500" width="7" height="7" fill="#f4f8fc" stroke="#405060"/></svg></span>
        <span class="win-btn"><svg class="glyph" viewBox="0 0 14 12"><rect x="1.500" y="1.500" width="10" height="8" fill="none" stroke="#405060"/><rect x="4.500" y="4.500" width="4" height="2" fill="none" stroke="#405060"/></svg></span>
        <span class="win-btn"><svg class="glyph" viewBox="0 0 14 12"><path d="M3 1l8 9M11 1l-8 9" stroke="#405060" stroke-width="3"/><path d="M3 1l8 9M11 1l-8 9" stroke="#f4f8fc" stroke-width="1.200"/></svg></span>
    </div>
    <div class="minimised second">
        <svg class="ico"><use href="#logo"/></svg>
        <span class="min-name">FFT...</span>
        <span class="win-btn"><svg class="glyph" viewBox="0 0 14 12"><path d="M4.500 3.500V.5h7v6h-3" fill="none" stroke="#405060"/><rect x="1.500" y="3.500" width="7" height="7" fill="#f4f8fc" stroke="#405060"/></svg></span>
        <span class="win-btn"><svg class="glyph" viewBox="0 0 14 12"><rect x="1.500" y="1.500" width="10" height="8" fill="none" stroke="#405060"/><rect x="4.500" y="4.500" width="4" height="2" fill="none" stroke="#405060"/></svg></span>
        <span class="win-btn"><svg class="glyph" viewBox="0 0 14 12"><path d="M3 1l8 9M11 1l-8 9" stroke="#405060" stroke-width="3"/><path d="M3 1l8 9M11 1l-8 9" stroke="#f4f8fc" stroke-width="1.200"/></svg></span>
    </div>

    <div class="statusbar">
        <span class="status-msg">Sweep freq range &gt; Digital</span>
        <div class="status-right">
            <svg class="ico status-ico"><use href="#meter"/><path d="M3 12h9M10 10l3 2-3 2" fill="none" stroke="#000"/></svg>
            <svg class="ico status-ico"><rect x="1.500" y="1.500" width="11" height="7" fill="#fff" stroke="#000"/><path d="M4 2v6M7 2v6M10 2v6" stroke="#000"/><path d="M3 12h9M10 10l3 2-3 2" fill="none" stroke="#000"/></svg>
            <span class="box box-scard">S/card<svg class="scard-arrow" viewBox="0 0 20 6"><path d="M1 3h17M15 1l3 2-3 2" fill="none" stroke="#a0a0a0"/></svg></span>
            <svg class="status-arrow" viewBox="0 0 12 10"><path d="M0 5h7" stroke="#000" stroke-width="3"/><path d="M6 0l6 5-6 5z"/></svg>
            <span class="box box-bal">Bal/unbal</span>
            <span class="red-box box-xlr">XLR</span>
            <span class="red-box box-48k">48k<br>16</span>
            <span class="red-box box-cs">CS</span>
            <span class="box box-empty"></span>
            <span class="box box-empty"></span>
            <span class="page-btn page-first">Page 1</span>
            <span class="page-btn">Page 2</span>
            <span class="page-btn">Page 3</span>
            <span class="page-btn">Page 4</span>
            <span class="page-btn page-off">Page 5</span>
        </div>
    </div>

    <script src="plot.js"></script>
</body>
</html>
```

FILE: styles.css
```css
* {
    box-sizing: border-box;
}

body {
    margin: 0;
    width: 1922px;
    height: 1041px;
    position: relative;
    overflow: hidden;
    background-color: #000;
    font-family: "Liberation Sans", Arial, sans-serif;
    font-size: 12px;
    color: #000;
}

.defs {
    position: absolute;
}

.screen-top {
    height: 8px;
    background-color: #000;
}

/* title + menu */
.titlebar {
    height: 23px;
    background-color: #6a007a;
    color: #ecdff0;
    display: flex;
    align-items: center;
    padding-left: 4px;
}

.logo-white {
    width: 16px;
    height: 16px;
}

.title-text {
    margin-left: 4px;
    font-size: 11.500px;
}

.sys-buttons {
    margin-left: auto;
    margin-right: 3px;
    display: flex;
}

.sys-btn {
    width: 46px;
    height: 23px;
}

.menubar {
    height: 21px;
    background-color: #fff;
    border-bottom: 1px solid #a8a8a8;
    display: flex;
    align-items: center;
    padding-left: 8px;
    gap: 12px;
    font-size: 12.500px;
}

.band {
    background-color: #f0f0f0;
}

.band-main {
    height: 30px;
    width: 100%;
    background-color: #fff;
    border-bottom: 1px solid #b0b0b0;
}

.tools {
    display: flex;
    align-items: center;
    background-color: #f0f0f0;
    height: 100%;
}

.tools-main {
    width: 1028px;
    padding-left: 7px;
    border-right: 1px solid #c0c0c0;
}

.tool {
    flex: none;
    width: 23px;
    height: 23px;
    display: flex;
    align-items: center;
    justify-content: center;
}

.tool.on {
    background-color: #fafafa;
    border: 1px solid #c8c8c8;
}

.tool.faded {
    opacity: 0.35;
}

.tool-dd {
    flex: none;
    height: 4px;
    border-top: 4px solid #202020;
    border-left: 4px solid transparent;
    border-right: 4px solid transparent;
    background-clip: padding-box;
    margin: 0 3px;
    width: 8px;
}

.sep {
    flex: none;
    width: 9px;
    height: 22px;
    background: linear-gradient(#b8b8b8, #b8b8b8) center / 1px 100% no-repeat;
}

.sep-thin {
    width: 7px;
}

.ico {
    flex: none;
    width: 16px;
    height: 16px;
    overflow: visible;
}

.ico-t {
    font-size: 7px;
    font-weight: bold;
    text-anchor: middle;
}

.ico-l {
    font-size: 6.500px;
    font-weight: bold;
    text-anchor: middle;
    fill: #102040;
}

.ico-ab {
    font-size: 9px;
    font-weight: bold;
}

.ico-s {
    font-size: 9px;
    font-weight: bold;
    fill: #1030c0;
}

.ico-n {
    font-size: 5.500px;
    text-anchor: middle;
    fill: #505050;
}

.ico-z {
    font-size: 5.500px;
    font-weight: bold;
    text-anchor: middle;
    fill: #c01010;
}

.ico-g {
    font-size: 13px;
    fill: #a8a8a8;
}

/* shortcut buttons */
.band-shortcuts {
    height: 25px;
    display: flex;
    align-items: center;
    gap: 5px;
    padding: 0 0 0 9px;
}

.shortcut {
    height: 19px;
    background-color: #f0f0f0;
    border: 1px solid #f8f8f8;
    border-right-color: #606060;
    border-bottom-color: #606060;
    box-shadow: 1px 1px 0 #b0b0b0;
    display: flex;
    align-items: center;
    justify-content: center;
    font-size: 11.500px;
    letter-spacing: -0.250px;
}

.w-default { width: 53px; }
.w-wizard { width: 84px; }
.w-multi { width: 63px; }
.w-digital { width: 68px; }
.w-apps { width: 77px; }
.w-tour { width: 73px; }

/* mdi window */
.mdi {
    height: 911px;
    border-top: 2px solid #606060;
    border-bottom: 1px solid #505050;
    background-color: #808080;
    padding: 0 3px;
}

.window {
    height: 100%;
    padding-top: 1px;
    background-color: #d5e3f0;
}

.win-title {
    height: 30px;
    padding: 5px 0 0 10px;
    background: linear-gradient(#b6c9d8, #d4e2f0);
    border-radius: 6px 6px 0 0;
    display: flex;
    align-items: center;
}

.win-title-text {
    margin-left: 4px;
    color: #8a98a8;
    font-size: 12.500px;
}

.win-buttons {
    margin-left: auto;
    margin-right: 9px;
    display: flex;
    gap: 2px;
}

.win-btn {
    flex: none;
    width: 32px;
    height: 18px;
    border: 1px solid #7c92a8;
    border-radius: 2px;
    background: linear-gradient(#c6d6e6 50%, #a8bed4 50%, #c4d6e8);
    display: flex;
    align-items: center;
    justify-content: center;
}

.glyph {
    width: 14px;
    height: 12px;
}

.win-body {
    margin: 0 7px 0 8px;
    height: 869px;
    background-color: #fff;
    border-left: 1px solid #606060;
}

.band-trace {
    height: 30px;
    background-color: #fff;
    border-bottom: 1px solid #a8a8a8;
}

.tools-trace {
    width: 682px;
    padding-left: 5.500px;
    border-right: 1px solid #c0c0c0;
}

.trace-main {
    height: 776px;
    display: flex;
    background-color: #f0f0f0;
    border-bottom: 1px solid #909090;
}

.plot {
    width: 1661px;
    flex: none;
}

.plot-svg {
    display: block;
    background-color: #000080;
}

.range-y-off {
    fill: #8c8c8c;
}

.range-on {
    fill: #ffff00;
}

.grid-line {
    stroke: #9094d2;
    stroke-width: 1;
    stroke-dasharray: 6 3;
    shape-rendering: crispEdges;
}

.grid-solid {
    stroke: #9094d2;
    stroke-width: 1;
    shape-rendering: crispEdges;
}

.axis-text text {
    fill: #ffffa0;
    font-size: 12.500px;
}

.axis-text .y-label {
    text-anchor: end;
}

.axis-text .x-label {
    text-anchor: middle;
}

.trace-b {
    fill: none;
    stroke: #b428e0;
    stroke-width: 1.400;
}

.trace-a {
    fill: none;
    stroke: #ffff50;
    stroke-width: 1;
}

.trace-a-shade {
    fill: none;
    stroke: #000;
    stroke-width: 1;
    transform: translateY(1px);
}

.cursor {
    fill: none;
    stroke: #fff;
    stroke-width: 1;
}

/* trace list */
.trace-list {
    flex: 1;
    padding-top: 4px;
}

.trace-row {
    height: 16px;
    display: flex;
    align-items: center;
    padding-left: 4px;
}

.chk {
    flex: none;
    width: 12px;
    height: 12px;
    background-color: #f6f6f6;
    border: 1px solid #f8f8f8;
    border-top: 2px solid #404040;
    border-left: 2px solid #404040;
    display: block;
}

.chk-mark {
    display: block;
    width: 10px;
    height: 10px;
}

.trace-name {
    margin-left: 4px;
    width: 204px;
    height: 16px;
    display: flex;
    align-items: center;
    overflow: hidden;
    white-space: pre;
    font-size: 11.500px;
}

.trace-name.selected {
    background-color: #0078d7;
    color: #fff;
}

.thumb {
    flex: none;
    width: 16px;
    height: 16px;
    margin-right: 6px;
}

.thumb path {
    stroke-width: 1.600;
}

.ch {
    flex: none;
    width: 13px;
}

.page {
    flex: none;
    margin-left: 1px;
    width: 13px;
    height: 13px;
    opacity: 0.35;
}

.page-dark {
    opacity: 1;
}

/* rows under the plot */
.lower-row {
    height: 32px;
    border-bottom: 1px solid #d0d0d0;
}

.lower-last {
    height: 31px;
    border-bottom: 1px solid #a8a8a8;
}

.band-cursor {
    width: 528px;
    height: 100%;
    display: flex;
    align-items: center;
    padding-left: 8px;
    border-right: 1px solid #d8d8d8;
}

.axis-name {
    width: 12px;
    color: #404040;
    margin-bottom: 4px;
}

.axis-y {
    width: 10px;
    margin-left: 7px;
}

.readout {
    width: 68px;
    height: 20px;
    background-color: #000;
    color: #f4f4f4;
    display: flex;
    align-items: center;
    justify-content: center;
    font-size: 11.500px;
}

.combo {
    flex: none;
    display: flex;
    background-color: #fff;
    border: 1px solid #f4f4f4;
    border-top: 2px solid #707070;
    border-left: 2px solid #707070;
    overflow: hidden;
    height: 19px;
    font-size: 11px;
}

.combo-text {
    flex: 1;
    padding-left: 2px;
    line-height: 16px;
    white-space: nowrap;
}

.combo-arrow {
    flex: none;
    width: 16px;
    position: relative;
    background-color: #ececec;
    border-right: 1px solid #707070;
    border-bottom: 1px solid #707070;
}

.combo-arrow::after {
    content: "";
    position: absolute;
    left: 3px;
    top: 6px;
    border-top: 4px solid #000;
    border-left: 4px solid transparent;
    border-right: 4px solid transparent;
}

.combo-unit {
    width: 73px;
    height: 21px;
    margin-left: 5px;
}

.relative-chk {
    margin-left: 10px;
}

.relative-text {
    margin-left: 6px;
    width: 40px;
    color: #202020;
}

.sep-cursor {
    margin: 0 1px 0 20px;
    width: 9px;
}

.band-cursor .wide {
    margin-right: 7px;
}

.band-calc {
    width: 528px;
    height: 100%;
    display: flex;
    align-items: center;
    padding: 6px 0 9px 7px;
    gap: 6px;
    border-right: 1px solid #d8d8d8;
}

.calc-swatch {
    flex: none;
    width: 27px;
    height: 100%;
    background-color: #000;
}

.calc-input {
    flex: none;
    width: 290px;
    height: 20px;
    margin-left: -2px;
    margin-right: 4px;
    background-color: #fff;
    border: 1px solid #707070;
    border-radius: 2px;
}

.sep-calc {
    width: 1px;
    height: 20px;
}

/* dialog */
.dialog {
    position: absolute;
    left: 1283px;
    top: 217px;
    width: 309px;
    height: 183px;
    padding: 0 7px 8px 8px;
    border: 1px solid #e0ecf4;
    border-radius: 7px 7px 0 0;
    background: linear-gradient(#a8bfd8, #c0d4e8 50%, #d6e8f8);
}

.dialog-title {
    height: 29px;
    padding-top: 2px;
    display: flex;
    align-items: center;
}

.dialog-name {
    margin-left: 4px;
    font-size: 12.500px;
    color: #101820;
}

.dialog-buttons {
    margin-left: auto;
    display: flex;
    gap: 3px;
}

.win-close {
    background: linear-gradient(#d87060 50%, #b84030 50%, #c86050);
    border-color: #905040;
}

.dialog-panel {
    height: 145px;
    background-color: #f0f0f0;
    border-top: 1px solid #606060;
    border-left: 2px solid #606060;
    padding: 5px 0 0 4px;
    display: grid;
    grid-template-rows: 25px 24px 25px 23px 19px;
    font-size: 11px;
    color: #202020;
}

.dlg-row {
    display: flex;
    align-items: flex-start;
    line-height: 21px;
    white-space: nowrap;
}

.dlg-label {
    flex: none;
    width: 87px;
}

.dlg-range {
    width: 58px;
}

.dlg-ch {
    flex: none;
    width: 29px;
}

.dlg-chb {
    flex: none;
    margin: 0 5px;
    width: 24px;
}

.combo-full {
    width: 195px;
}

.combo-rate {
    width: 105px;
}

.combo-step {
    width: 138px;
}

.chk-tie {
    margin: 3px 6px 0 6px;
}

.chk-tied {
    margin: 4px 7px 0 33px;
    background-color: #f0f0f0;
    border-color: #a0a0a0;
    border-right-color: #f8f8f8;
    border-bottom-color: #f8f8f8;
}

.chk-auto {
    margin: 4px 6px 0 10px;
}

.muted {
    color: #8c8c8c;
}

.range-box {
    flex: none;
    width: 27px;
    height: 18px;
    background-color: #f8f8f8;
    border-top: 1px solid #808080;
    border-left: 1px solid #808080;
    text-align: right;
    padding-right: 3px;
    line-height: 17px;
    color: #808080;
}

.dlg-unit {
    margin-left: 6px;
}

.mouse {
    position: absolute;
    left: 1433px;
    top: 231px;
    width: 14px;
    height: 20px;
}

/* minimised windows */
.minimised {
    position: absolute;
    top: 992px;
    width: 159px;
    height: 25px;
    padding: 4px 4px 0 4px;
    display: flex;
    align-items: flex-start;
    background: linear-gradient(#b6c9d8, #d4e2f0);
    border: 1px solid #6c7c8c;
    border-bottom: none;
    border-radius: 9px 9px 0 0;
    gap: 2px;
}

.minimised.first {
    left: 3px;
}

.minimised.second {
    left: 163px;
}

.minimised .win-btn {
    width: 32px;
    height: 17px;
}

.min-name {
    width: 27px;
    font-size: 12px;
    line-height: 17px;
    color: #9aa6b2;
    margin-left: 1px;
}

/* status bar */
.statusbar {
    height: 23px;
    background-color: #f0f0f0;
    border-bottom: 1px solid #6a007a;
    display: flex;
    align-items: center;
    padding-left: 3px;
    position: relative;
}

.status-msg {
    color: #d01010;
    font-weight: bold;
    font-size: 12px;
}

.status-right {
    margin-left: auto;
    padding-right: 6px;
    display: flex;
    align-items: center;
    gap: 4px;
}

.status-ico {
    margin-right: 2px;
    width: 14px;
}

.box {
    height: 15px;
    border-top: 1px solid #b0b0b0;
    border-left: 1px solid #b0b0b0;
    background-color: #f4f4f4;
    display: block;
    text-align: center;
    line-height: 14px;
    font-size: 12px;
}

.box-scard {
    width: 39px;
    height: 16px;
    color: #a0a0a0;
    font-size: 9.500px;
    line-height: 9px;
}

.scard-arrow {
    display: block;
    width: 20px;
    height: 6px;
    margin: 0 auto;
}

.status-arrow {
    width: 12px;
    height: 10px;
}

.box-bal {
    width: 53px;
    font-size: 12px;
    color: #303030;
}

.red-box {
    height: 15px;
    background-color: #f01010;
    color: #a01010;
    text-align: center;
    line-height: 15px;
    font-size: 12px;
}

.box-xlr { width: 49px; }
.box-48k { width: 32px; font-size: 7.500px; line-height: 7.500px; }
.box-cs { width: 15px; }
.box-empty { width: 54px; }

.page-btn {
    width: 43px;
    height: 15px;
    margin-left: -3px;
    border: 1px solid #000;
    border-radius: 3px;
    background-color: #f8f8f8;
    font-weight: bold;
    text-align: center;
    line-height: 13px;
    font-size: 12px;
}

.page-first {
    margin-left: 0;
}

.page-off {
    font-weight: normal;
    font-size: 11.500px;
}
```

FILE: plot.js
```js
// builds the log grid of the sweep plot
var grid = document.getElementById("grid");
var left = 107, right = 1658, top_ = 207, bottom = 898;

function line(x1, y1, x2, y2, cls) {
    var el = document.createElementNS("http://www.w3.org/2000/svg", "line");
    el.setAttribute("x1", x1);
    el.setAttribute("y1", y1);
    el.setAttribute("x2", x2);
    el.setAttribute("y2", y2);
    el.setAttribute("class", cls);
    grid.appendChild(el);
}

function xPos(v) {
    return Math.round(146.3 + 231.9 * (Math.log10(v) + 4)) + 0.5;
}

function yPos(v) {
    return Math.round(230 + 95.43 * (2 - Math.log10(v))) + 0.5;
}

// vertical lines, 100u decade up to 100
for (var e = -5; e <= 2; e++) {
    for (var k = 1; k <= 9; k++) {
        var x = xPos(k * Math.pow(10, e));
        if (x <= left || x >= right) continue;
        line(x, top_, x, k == 1 ? bottom + 5 : bottom, "grid-line");
    }
}

// horizontal lines, top of the scale is only the frame
for (var e2 = -5; e2 <= 1; e2++) {
    for (var j = 1; j <= 10; j++) {
        var y = yPos(j * Math.pow(10, e2));
        if (y >= bottom) continue;
        line(j == 1 || j == 10 ? left - 6 : left, y, right, y, "grid-line");
    }
}

line(left, top_ + 0.5, right, top_ + 0.5, "grid-line");
line(right + 0.5, top_, right + 0.5, bottom, "grid-line");
line(left + 0.5, top_, left + 0.5, bottom, "grid-solid");
line(left, bottom + 0.5, right, bottom + 0.5, "grid-solid");
```
